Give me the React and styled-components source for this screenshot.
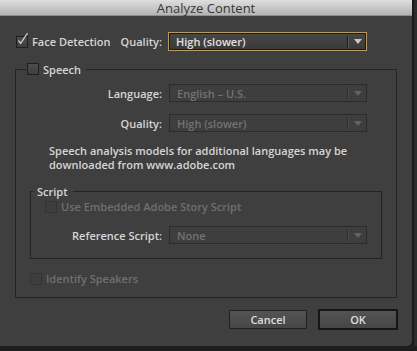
import React from 'react'
import styled, { createGlobalStyle } from 'styled-components'

const ui = {
	font: `"Open Sans", "Liberation Sans", sans-serif`,
	body: '#3f3f3f',
	text: '#d6d6d6',
	off: '#6f6f6f',
	line: '#242424',
	focus: '#d29a22',
}

const Global = createGlobalStyle`
	html, body { margin: 0; background: #262626; }
	* { box-sizing: border-box; }
`

const Screen = styled.div`
	width: 417px;
	height: 351px;
	background: #1d1d1d;
	display: flex;
	font-family: ${ ui.font };
`
const Dialog = styled.div`
	width: 412px;
	height: 346px;
	background: ${ ui.body };
	border-bottom-right-radius: 5px;
	display: flex;
	flex-direction: column;
	flex-shrink: 0;
`
const Edge = styled.div`
	flex-grow: 1;
	height: 346px;
	background: #2c2c2c;
	border-left: 2px solid #1a1a1a;
`
const TitleBar = styled.div`
	height: 16px;
	background: linear-gradient(#dedede, #b3b3b3);
	border-bottom: 1px solid #8f8f8f;
	color: #363636;
	font-size: 13px;
	line-height: 16px;
	text-align: center;
`
const Body = styled.div`
	flex-grow: 1;
	padding-top: 16px;
	display: flex;
	flex-direction: column;
`
const Row = styled.div`
	display: grid;
	grid-template-columns: ${ p => p.labelWidth }px ${ p => p.selectWidth || 198 }px;
	column-gap: ${ p => p.gap || 7 }px;
	align-items: center;
	margin-left: ${ p => p.indent || 0 }px;
	margin-top: ${ p => p.top || 0 }px;
`
const LabelCell = styled.div`
	display: flex;
	align-items: center;
	justify-content: flex-end;
	min-width: 0;
`
const Label = styled.span`
	font-size: 11px;
	font-weight: 600;
	color: ${ p => p.disabled ? ui.off : ui.text };
	white-space: nowrap;
	margin-left: ${ p => p.push ? 'auto' : 0 };
`
const CheckRow = styled.label`
	display: flex;
	align-items: center;
	gap: 4px;
	margin-left: ${ p => p.indent || 0 }px;
	margin-top: ${ p => p.top || 0 }px;
`
const Box = styled.span`
	position: relative;
	width: 12px;
	height: 12px;
	flex-shrink: 0;
	border: 1px solid ${ p => p.disabled ? '#343434' : '#1f1f1f' };
	background: ${ p => p.disabled ? '#3d3d3d' : 'linear-gradient(#4d4d4d, #3e3e3e)' };
	svg {
		position: absolute;
		left: -1px;
		top: -5px;
	}
`
const SelectBox = styled.div`
	height: ${ p => p.focused ? 19 : 18 }px;
	display: flex;
	align-items: center;
	border: 1px solid ${ p => p.focused ? ui.focus : '#2b2b2b' };
	box-shadow: ${ p => p.focused ? 'inset 0 0 0 1px #1c1c1c' : 'none' };
	background: ${ p => p.disabled ? '#3e3e3e' : 'linear-gradient(#474747, #3a3a3a)' };
	padding-left: 7px;
`
const SelectText = styled.span`
	flex-grow: 1;
	font-size: 11px;
	font-weight: 600;
	color: ${ p => p.disabled ? '#737373' : '#e2e2e2' };
	white-space: nowrap;
`
const Divider = styled.span`
	width: 2px;
	height: 12px;
	border-left: 1px solid ${ p => p.disabled ? '#2e2e2e' : '#1c1c1c' };
	border-right: 1px solid ${ p => p.disabled ? '#4a4a4a' : '#5a5a5a' };
`
const Arrow = styled.span`
	width: 17px;
	display: flex;
	justify-content: center;
	svg { display: block; }
`
const Group = styled.fieldset`
	margin: ${ p => p.top || 0 }px 0 0 ${ p => p.left || 0 }px;
	width: ${ p => p.width }px;
	height: ${ p => p.height }px;
	padding: 0;
	border: 1px solid ${ ui.line };
	min-width: 0;
`
const Legend = styled.legend`
	margin-left: ${ p => p.offset || 0 }px;
	padding: 0 5px 0 ${ p => p.padLeft || 0 }px;
	display: flex;
	align-items: center;
	gap: 4px;
	height: 14px;
`
const Note = styled.p`
	margin: ${ p => p.top || 0 }px 0 0 ${ p => p.indent || 0 }px;
	font-size: 11px;
	font-weight: 600;
	line-height: 13.5px;
	color: ${ ui.text };
	width: 320px;
`
const Footer = styled.div`
	display: flex;
	justify-content: flex-end;
	gap: 11px;
	padding: 12px 14px 0 0;
`
const Button = styled.button`
	width: ${ p => p.w }px;
	height: ${ p => p.primary ? 21 : 19 }px;
	margin-top: ${ p => p.primary ? -1 : 0 }px;
	font-family: ${ ui.font };
	font-size: 11px;
	font-weight: 600;
	color: #dedede;
	background: linear-gradient(#545454, #464646);
	border: ${ p => p.primary ? '2px solid #161616' : '1px solid #1f1f1f' };
	border-radius: 1px;
	padding: 0;
`

const Check = () => (
	<svg width="14" height="16" viewBox="0 0 14 16">
		<path d="M2.5 8.5 L4.7 11.3 L11.5 1" fill="none" stroke="#d0d0d0" strokeWidth="1.3" />
	</svg>
)

const CheckBox = ({ checked, disabled }) => (
	<Box disabled={ disabled }>{ checked && <Check /> }</Box>
)

const Select = ({ value, disabled, focused }) => (
	<SelectBox disabled={ disabled } focused={ focused }>
		<SelectText disabled={ disabled }>{ value }</SelectText>
		<Divider disabled={ disabled } />
		<Arrow>
			<svg width="8" height="5" viewBox="0 0 8 5">
				<path d="M0 0 H8 L4 5 Z" fill={ disabled ? '#626262' : '#c9c9c9' } />
			</svg>
		</Arrow>
	</SelectBox>
)

const App = () => {
	return (
		<Screen>
			<Global />
			<Dialog>
				<TitleBar>Analyze Content</TitleBar>
				<Body>
					<Row labelWidth={ 146 } selectWidth={ 199 } gap={ 6 } indent={ 16 }>
						<LabelCell>
							<CheckRow>
								<CheckBox checked />
								<Label>Face Detection</Label>
							</CheckRow>
							<Label push>Quality:</Label>
						</LabelCell>
						<Select value="High (slower)" focused />
					</Row>

					<Group left={ 15 } top={ 11 } width={ 382 } height={ 236 }>
						<Legend offset={ 10 } padLeft={ 1 }>
							<CheckBox />
							<Label>Speech</Label>
						</Legend>
						<Row labelWidth={ 146 } top={ 8 }>
							<LabelCell><Label>Language:</Label></LabelCell>
							<Select value="English – U.S." disabled />
						</Row>
						<Row labelWidth={ 146 } top={ 12 }>
							<LabelCell><Label>Quality:</Label></LabelCell>
							<Select value="High (slower)" disabled />
						</Row>
						<Note indent={ 33 } top={ 12 }>
							Speech analysis models for additional languages may be downloaded from www.adobe.com
						</Note>

						<Group left={ 14 } top={ 13 } width={ 352 } height={ 75 }>
							<Legend offset={ 2 } padLeft={ 4 }>
								<Label>Script</Label>
							</Legend>
							<CheckRow indent={ 14 } top={ 1 }>
								<CheckBox disabled />
								<Label disabled>Use Embedded Adobe Story Script</Label>
							</CheckRow>
							<Row labelWidth={ 131 } top={ 12 }>
								<LabelCell><Label>Reference Script:</Label></LabelCell>
								<Select value="None" disabled />
							</Row>
						</Group>

						<CheckRow indent={ 14 } top={ 12 }>
							<CheckBox disabled />
							<Label disabled>Identify Speakers</Label>
						</CheckRow>
					</Group>

					<Footer>
						<Button w={ 78 }>Cancel</Button>
						<Button w={ 80 } primary>OK</Button>
					</Footer>
				</Body>
			</Dialog>
			<Edge />
		</Screen>
	)
}

export default App
